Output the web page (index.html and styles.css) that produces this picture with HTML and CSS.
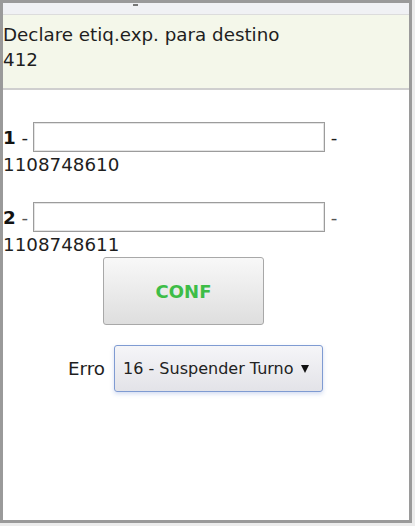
FILE: index.html
```html
<!DOCTYPE html>
<html lang="pt">
<head>
<meta charset="utf-8">
<link rel="stylesheet" href="styles.css">
</head>
<body>
<div class="frame">
  <div class="topbar"><span class="tick"></span></div>
  <div class="header">Declare etiq.exp. para destino<br>412</div>
  <div class="content">
    <div class="row">
      <div class="row-top"><b>1</b>&nbsp;-&nbsp;<input class="field" type="text">&nbsp;-</div>
      <div class="num">1108748610</div>
    </div>
    <div class="row">
      <div class="row-top"><b>2</b>&nbsp;<span class="dash">-</span>&nbsp;<input class="field" type="text">&nbsp;<span class="dash">-</span></div>
      <div class="num">1108748611</div>
    </div>
    <button class="btn" type="button">CONF</button>
    <div class="erro">
      <span>Erro</span>
      <div class="select">
        <span>16 - Suspender Turno</span>
        <svg class="arrow" width="8" height="9" viewBox="0 0 8 9"><polygon points="0,1 8,1 4,9" fill="#111"/></svg>
      </div>
    </div>
  </div>
</div>
</body>
</html>
```

FILE: styles.css
```css
html, body {
  margin: 0;
  padding: 0;
  background: #ececec;
}
body {
  font-family: "DejaVu Sans", sans-serif;
  font-size: 18.3px;
  color: #1e1e1e;
}
.frame {
  box-sizing: border-box;
  width: 412px;
  height: 523px;
  border: 3px solid #9a9a9a;
  background: #fff;
  display: flex;
  flex-direction: column;
}
.topbar {
  height: 11px;
  background: #f0f1f4;
  border-bottom: 1px solid #dcdcdc;
  position: relative;
}
.tick {
  position: absolute;
  left: 130px;
  top: 1px;
  width: 5px;
  height: 2px;
  background: #777;
}
.header {
  background: #f4f7ea;
  line-height: 25px;
  padding: 7px 0 16px 0;
  border-bottom: 2px solid #cfcfcf;
}
.content {
  padding-top: 32px;
  display: flex;
  flex-direction: column;
  align-items: flex-start;
}
.row {
  margin-bottom: 25px;
  line-height: 25px;
}
.row:nth-child(2) {
  margin-bottom: 0;
}
.row-top {
  display: flex;
  align-items: center;
  height: 30px;
  white-space: nowrap;
}
.row-top b {
  color: #111;
}
.dash {
  color: #555;
}
.field {
  box-sizing: border-box;
  width: 292px;
  height: 30px;
  margin: 0 0 0 -1px;
  border: 1px solid #9c9c9c;
  box-shadow: inset 0 0 0 1px #e4e4e4;
  background: #fff;
  padding: 0;
}
.num {
  height: 25px;
}
.btn {
  box-sizing: border-box;
  margin: 0 0 0 100px;
  width: 161px;
  height: 68px;
  border: 1px solid #a8a8a8;
  border-radius: 3px;
  background: linear-gradient(#f8f8f8, #dedede);
  color: #3dbd47;
  font-family: "DejaVu Sans", sans-serif;
  font-weight: bold;
  font-size: 18px;
  padding: 0;
}
.erro {
  margin: 20px 0 0 65px;
  display: flex;
  align-items: center;
  gap: 9px;
}
.select {
  box-sizing: border-box;
  width: 209px;
  height: 47px;
  border: 1px solid #7f9bd2;
  border-radius: 3px;
  background: linear-gradient(#f5f5f8, #e3e3e8);
  box-shadow: 0 2px 4px rgba(110, 140, 210, 0.3);
  display: flex;
  align-items: center;
  justify-content: space-between;
  padding: 0 13px 0 8px;
  font-size: 16px;
  color: #222;
}
.arrow {
  display: block;
}
```
